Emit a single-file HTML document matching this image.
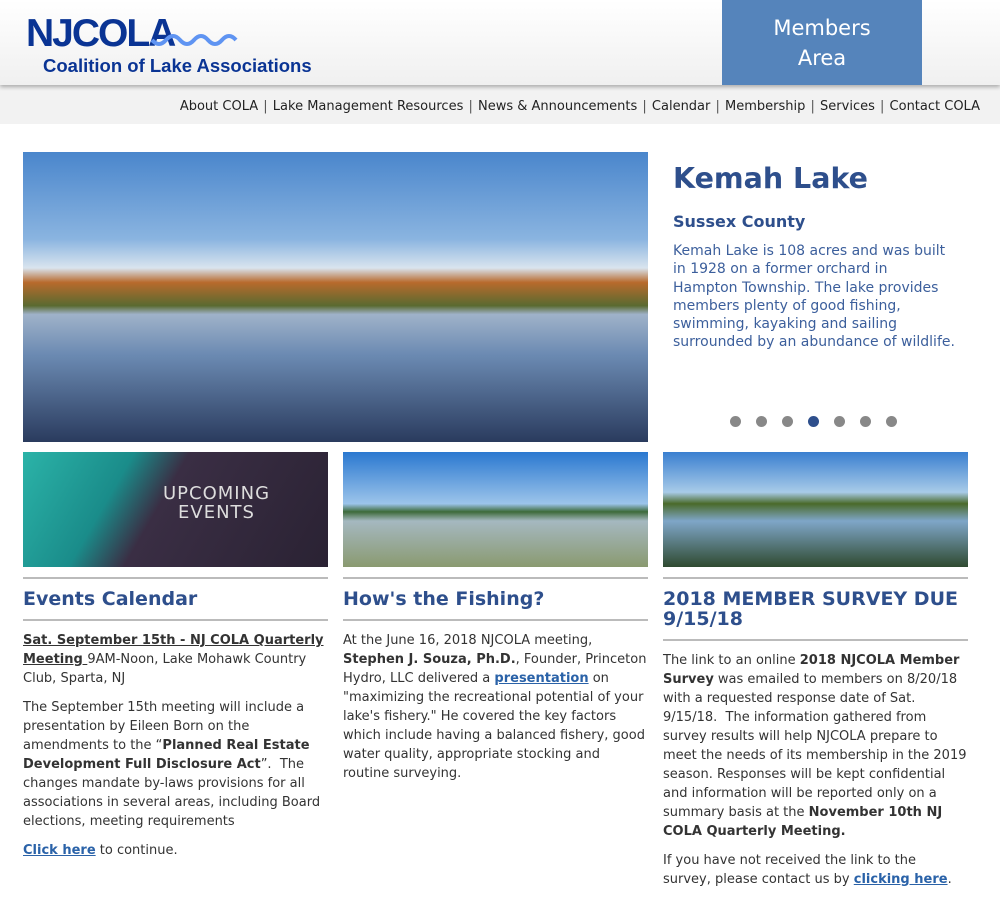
<!DOCTYPE html>
<html><head><meta charset="utf-8"><style>
body{margin:0;width:1000px;height:905px;overflow:hidden;background:#fff;font-family:"DejaVu Sans",Verdana,sans-serif;color:#333;font-size:13px}
.hdr{height:85px;background:linear-gradient(#fff,#f0f0f0);position:relative;box-shadow:0 2px 4px rgba(0,0,0,.3)}
.logo1{position:absolute;left:26px;top:12px;font:bold 39px "Liberation Sans",sans-serif;color:#0a3494;letter-spacing:-2px}
.logo2{position:absolute;left:43px;top:55px;font:bold 18.5px "Liberation Sans",sans-serif;color:#0a3494}
.wave{position:absolute;left:150px;top:30px}
.mem{position:absolute;left:722px;top:0;width:200px;height:85px;background:#5584bb;color:#fff;text-align:center;font-size:21px;line-height:30px;padding-top:13px;box-sizing:border-box}
.nav{height:39px;background:#f2f2f2;text-align:right;padding-right:20px;line-height:43px;font-size:13px;color:#222}
.nav span{color:#555;margin:0 1px}
.hero{position:absolute;left:23px;top:152px;width:625px;height:290px;background:linear-gradient(#4a86cc 0%,#8ab4e0 30%,#d9e4ee 40%,#b86a2c 45%,#5a6a30 53%,#9fb2c9 56%,#6b8ab2 70%,#2a3b5e 100%)}
.k h1{position:absolute;left:673px;top:162px;margin:0;font-size:28.5px;color:#2e4f8c}
.k h3{position:absolute;left:673px;top:212px;margin:0;font-size:16px;color:#2e4f8c}
.k p{position:absolute;left:673px;top:242px;margin:0;white-space:nowrap;font-size:14px;line-height:18.3px;color:#3c5f9c}
.dots{position:absolute;left:730px;top:416px}
.dots i{display:inline-block;width:11px;height:11px;border-radius:50%;background:#888;margin-right:15px}
.col{position:absolute;top:452px;width:305px}
.img{height:115px}
.col hr{border:0;border-top:2px solid #bbb;margin:10px 0 0}
.col h2{font-size:19px;color:#2e4f8c;margin:10px 0 8px;line-height:20px}
.col p{margin:10px 0;line-height:19px}
a{color:#2a62a8;font-weight:bold}
</style></head><body>
<div class="hdr">
<div class="logo1">NJCOLA</div>
<svg class="wave" width="95" height="20"><path d="M2 10 q7 8 14 0 t14 0 t14 0 t14 0 t14 0 t14 0" fill="none" stroke="#5f94f2" stroke-width="4"/></svg>
<div class="logo2">Coalition of Lake Associations</div>
<div class="mem">Members<br>Area</div>
</div>
<div class="nav">About COLA <span>|</span> Lake Management Resources <span>|</span> News &amp; Announcements <span>|</span> Calendar <span>|</span> Membership <span>|</span> Services <span>|</span> Contact COLA</div>
<div class="hero"></div>
<div class="k"><h1>Kemah Lake</h1><h3>Sussex County</h3><p>Kemah Lake is 108 acres and was built<br>in 1928 on a former orchard in<br>Hampton Township. The lake provides<br>members plenty of good fishing,<br>swimming, kayaking and sailing<br>surrounded by an abundance of wildlife.</p></div>
<div class="dots"><i></i><i></i><i></i><i style="background:#2e4f8c"></i><i></i><i></i><i></i></div>
<div class="col" style="left:23px"><div class="img" style="background:linear-gradient(120deg,#2bb3a8 0%,#1a8c8a 30%,#3a2e44 45%,#2a2233 100%);position:relative"><div style="position:absolute;left:140px;top:32px;color:#ddd;font-size:18px;line-height:19px;text-align:center;letter-spacing:1px">UPCOMING<br>EVENTS</div></div><hr>
<h2>Events Calendar</h2><hr style="margin-bottom:0">
<p><u><b>Sat. September 15th - NJ COLA Quarterly Meeting </b></u>9AM-Noon, Lake Mohawk Country Club, Sparta, NJ</p>
<p>The September 15th meeting will include a presentation by Eileen Born on the amendments to the “<b>Planned Real Estate Development Full Disclosure Act</b>”.&nbsp; The changes mandate by-laws provisions for all associations in several areas, including Board elections, meeting requirements</p>
<p><a href="#">Click here</a> to continue.</p></div>
<div class="col" style="left:343px"><div class="img" style="background:linear-gradient(#2a78d0 0%,#9cc4ea 45%,#3d6a3a 52%,#a5b8c0 60%,#8a9a70 100%)"></div><hr>
<h2>How's the Fishing?</h2><hr>
<p>At the June 16, 2018 NJCOLA meeting, <b>Stephen J. Souza, Ph.D.</b>, Founder, Princeton Hydro, LLC delivered a <a href="#">presentation</a> on "maximizing the recreational potential of your lake's fishery." He covered the key factors which include having a balanced fishery, good water quality, appropriate stocking and routine surveying.</p></div>
<div class="col" style="left:663px"><div class="img" style="background:linear-gradient(#3a7fd0 0%,#a8cbe8 35%,#4a6a2a 45%,#7fa6c8 60%,#2f4a30 100%)"></div><hr>
<h2>2018 MEMBER SURVEY DUE 9/15/18</h2><hr>
<p>The link to an online <b>2018 NJCOLA Member Survey</b> was emailed to members on 8/20/18 with a requested response date of Sat. 9/15/18.&nbsp; The information gathered from survey results will help NJCOLA prepare to meet the needs of its membership in the 2019 season. Responses will be kept confidential and information will be reported only on a summary basis at the <b>November 10th NJ COLA Quarterly Meeting.</b></p>
<p>If you have not received the link to the survey, please contact us by <a href="#">clicking here</a>.</p></div>
</body></html>
